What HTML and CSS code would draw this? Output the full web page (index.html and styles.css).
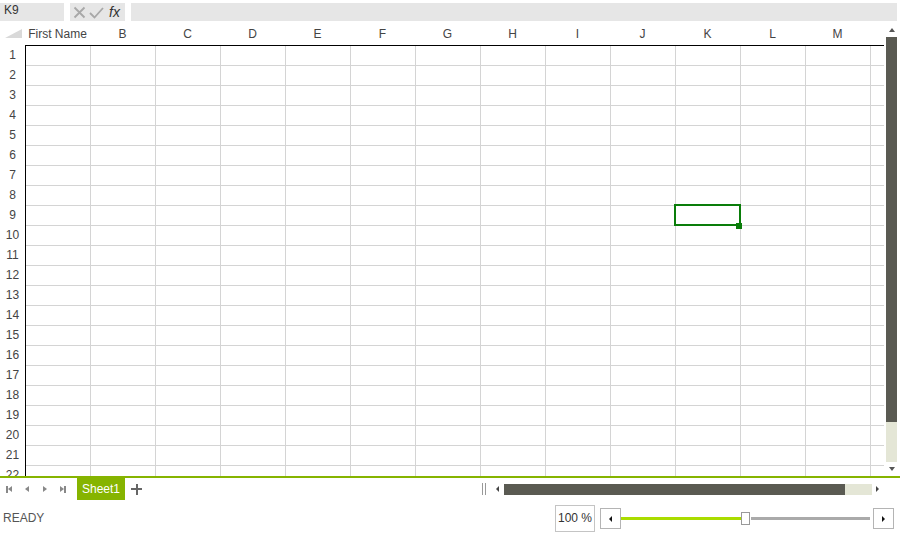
FILE: index.html
```html
<!DOCTYPE html>
<html>
<head>
<meta charset="utf-8">
<link rel="stylesheet" href="styles.css">
</head>
<body>
<div class="app">
  <div class="formula-bar">
    <div class="namebox">K9</div>
    <div class="fx-btns">
      <svg width="13" height="13" viewBox="0 0 13 13" class="ico"><path d="M1.5 1.5 L11.5 11.5 M11.5 1.5 L1.5 11.5" stroke="#a8a8a8" stroke-width="1.8" fill="none"/></svg>
      <svg width="15" height="13" viewBox="0 0 15 13" class="ico"><path d="M1 7 L5.5 11.5 L14 2" stroke="#a8a8a8" stroke-width="1.8" fill="none"/></svg>
      <span class="fx">fx</span>
    </div>
    <div class="formula"></div>
  </div>

  <div class="main">
    <div class="grid">
      <div class="hrow">
        <div class="corner"><span class="tri"></span></div>
        <div class="ch">First Name</div><div class="ch">B</div><div class="ch">C</div><div class="ch">D</div><div class="ch">E</div><div class="ch">F</div><div class="ch">G</div><div class="ch">H</div><div class="ch">I</div><div class="ch">J</div><div class="ch">K</div><div class="ch">L</div><div class="ch">M</div><div class="ch">N</div>
      </div>
      <div class="body">
        <div class="row"><div class="rh">1</div><span></span><span></span><span></span><span></span><span></span><span></span><span></span><span></span><span></span><span></span><span></span><span></span><span></span><span></span></div>
        <div class="row"><div class="rh">2</div><span></span><span></span><span></span><span></span><span></span><span></span><span></span><span></span><span></span><span></span><span></span><span></span><span></span><span></span></div>
        <div class="row"><div class="rh">3</div><span></span><span></span><span></span><span></span><span></span><span></span><span></span><span></span><span></span><span></span><span></span><span></span><span></span><span></span></div>
        <div class="row"><div class="rh">4</div><span></span><span></span><span></span><span></span><span></span><span></span><span></span><span></span><span></span><span></span><span></span><span></span><span></span><span></span></div>
        <div class="row"><div class="rh">5</div><span></span><span></span><span></span><span></span><span></span><span></span><span></span><span></span><span></span><span></span><span></span><span></span><span></span><span></span></div>
        <div class="row"><div class="rh">6</div><span></span><span></span><span></span><span></span><span></span><span></span><span></span><span></span><span></span><span></span><span></span><span></span><span></span><span></span></div>
        <div class="row"><div class="rh">7</div><span></span><span></span><span></span><span></span><span></span><span></span><span></span><span></span><span></span><span></span><span></span><span></span><span></span><span></span></div>
        <div class="row"><div class="rh">8</div><span></span><span></span><span></span><span></span><span></span><span></span><span></span><span></span><span></span><span></span><span></span><span></span><span></span><span></span></div>
        <div class="row"><div class="rh">9</div><span></span><span></span><span></span><span></span><span></span><span></span><span></span><span></span><span></span><span></span><span></span><span></span><span></span><span></span></div>
        <div class="row"><div class="rh">10</div><span></span><span></span><span></span><span></span><span></span><span></span><span></span><span></span><span></span><span></span><span></span><span></span><span></span><span></span></div>
        <div class="row"><div class="rh">11</div><span></span><span></span><span></span><span></span><span></span><span></span><span></span><span></span><span></span><span></span><span></span><span></span><span></span><span></span></div>
        <div class="row"><div class="rh">12</div><span></span><span></span><span></span><span></span><span></span><span></span><span></span><span></span><span></span><span></span><span></span><span></span><span></span><span></span></div>
        <div class="row"><div class="rh">13</div><span></span><span></span><span></span><span></span><span></span><span></span><span></span><span></span><span></span><span></span><span></span><span></span><span></span><span></span></div>
        <div class="row"><div class="rh">14</div><span></span><span></span><span></span><span></span><span></span><span></span><span></span><span></span><span></span><span></span><span></span><span></span><span></span><span></span></div>
        <div class="row"><div class="rh">15</div><span></span><span></span><span></span><span></span><span></span><span></span><span></span><span></span><span></span><span></span><span></span><span></span><span></span><span></span></div>
        <div class="row"><div class="rh">16</div><span></span><span></span><span></span><span></span><span></span><span></span><span></span><span></span><span></span><span></span><span></span><span></span><span></span><span></span></div>
        <div class="row"><div class="rh">17</div><span></span><span></span><span></span><span></span><span></span><span></span><span></span><span></span><span></span><span></span><span></span><span></span><span></span><span></span></div>
        <div class="row"><div class="rh">18</div><span></span><span></span><span></span><span></span><span></span><span></span><span></span><span></span><span></span><span></span><span></span><span></span><span></span><span></span></div>
        <div class="row"><div class="rh">19</div><span></span><span></span><span></span><span></span><span></span><span></span><span></span><span></span><span></span><span></span><span></span><span></span><span></span><span></span></div>
        <div class="row"><div class="rh">20</div><span></span><span></span><span></span><span></span><span></span><span></span><span></span><span></span><span></span><span></span><span></span><span></span><span></span><span></span></div>
        <div class="row"><div class="rh">21</div><span></span><span></span><span></span><span></span><span></span><span></span><span></span><span></span><span></span><span></span><span></span><span></span><span></span><span></span></div>
        <div class="row"><div class="rh">22</div><span></span><span></span><span></span><span></span><span></span><span></span><span></span><span></span><span></span><span></span><span></span><span></span><span></span><span></span></div>
        <div class="selection"><i class="handle"></i></div>
      </div>
    </div>
    <div class="vscroll">
      <div class="arrow-area"><i class="tri-up"></i></div>
      <div class="vthumb"></div>
      <div class="vtrack"></div>
      <div class="arrow-area down"><i class="tri-down"></i></div>
    </div>
  </div>

  <div class="tabbar">
    <div class="nav">
      <div class="navbtn"><i class="bar"></i><i class="tri-left"></i></div>
      <div class="navbtn"><i class="tri-left"></i></div>
      <div class="navbtn"><i class="tri-right"></i></div>
      <div class="navbtn"><i class="tri-right"></i><i class="bar"></i></div>
    </div>
    <div class="tab">Sheet1</div>
    <div class="add"><i class="plus-h"></i><i class="plus-v"></i></div>
    <div class="hscroll">
      <div class="splitter"></div>
      <i class="sm-left"></i>
      <div class="htrack"><div class="hthumb"></div></div>
      <i class="sm-right"></i>
    </div>
  </div>

  <div class="statusbar">
    <div class="ready">READY</div>
    <div class="zoom">
      <div class="zoomval">100 %</div>
      <div class="zbtn"><i class="bk-left"></i></div>
      <div class="slider">
        <div class="fill"></div>
        <div class="thumb"></div>
        <div class="rest"></div>
      </div>
      <div class="zbtn"><i class="bk-right"></i></div>
    </div>
  </div>
</div>
</body>
</html>
```

FILE: styles.css
```css
* { box-sizing: border-box; }
html, body { margin: 0; padding: 0; }
body {
  width: 900px;
  height: 534px;
  overflow: hidden;
  background: #fff;
  font-family: "Liberation Sans", Arial, sans-serif;
  font-size: 12px;
  color: #444;
}
.app { display: flex; flex-direction: column; width: 900px; height: 534px; }

/* formula bar */
.formula-bar {
  display: flex;
  height: 24px;
  padding: 3px 3px 0 0;
  gap: 6px;
}
.namebox {
  width: 64px;
  height: 18px;
  background: #e6e6e6;
  padding-left: 4px;
  line-height: 14px;
  color: #333;
}
.fx-btns {
  width: 55px;
  height: 18px;
  background: #e6e6e6;
  display: flex;
  align-items: center;
  padding-left: 3px;
  gap: 3px;
}
.ico { display: block; }
.fx {
  font-style: italic;
  font-size: 14px;
  color: #333;
  margin-left: 2px;
  line-height: 16px;
}
.formula { flex: 1; height: 18px; background: #e6e6e6; }

/* main grid */
.main { display: flex; height: 452px; }
.grid {
  width: 884px;
  overflow: hidden;
  display: flex;
  flex-direction: column;
}
.hrow { display: flex; height: 22px; flex: none; }
.corner { width: 25px; flex: none; position: relative; }
.tri {
  position: absolute;
  left: 5px;
  top: 5px;
  width: 0; height: 0;
  border-left: 17px solid transparent;
  border-bottom: 9px solid #d9d9d9;
}
.ch {
  width: 65px;
  flex: none;
  border-bottom: 1px solid #000;
  text-align: center;
  line-height: 21px;
  color: #444;
  white-space: nowrap;
}
.body { position: relative; flex: 1; overflow: hidden; }
.row { display: flex; height: 20px; }
.rh {
  width: 26px;
  flex: none;
  border-right: 1px solid #000;
  text-align: center;
  line-height: 19px;
  color: #444;
}
.row span {
  width: 65px;
  flex: none;
  border-right: 1px solid #d4d4d4;
  border-bottom: 1px solid #d4d4d4;
}
.selection {
  position: absolute;
  left: 674px;
  top: 158px;
  width: 67px;
  height: 22px;
  border: 2px solid #0a7d0a;
}
.handle {
  position: absolute;
  right: -3px;
  bottom: -5px;
  width: 6px;
  height: 6px;
  background: #0a7d0a;
}

/* vertical scroll */
.vscroll {
  width: 11px;
  margin-left: 2px;
  display: flex;
  flex-direction: column;
}
.arrow-area { height: 13px; display: flex; justify-content: center; align-items: center; flex: none; }
.arrow-area.down { height: 14px; }
.tri-up { width: 0; height: 0; border-left: 3.5px solid transparent; border-right: 3.5px solid transparent; border-bottom: 4px solid #555; margin-bottom: 1px; }
.tri-down { width: 0; height: 0; border-left: 3.5px solid transparent; border-right: 3.5px solid transparent; border-top: 4px solid #555; }
.vthumb { height: 385px; background: #5a5a52; flex: none; }
.vtrack { height: 40px; background: #e4e6d6; flex: none; }

/* tab bar */
.tabbar {
  height: 24px;
  border-top: 2px solid #86b400;
  display: flex;
  align-items: stretch;
}
.nav { display: flex; width: 77px; }
.navbtn { width: 18px; display: flex; justify-content: center; align-items: center; }
.navbtn .bar { width: 1.5px; height: 7px; background: #888; }
.tri-left { width: 0; height: 0; border-top: 3.5px solid transparent; border-bottom: 3.5px solid transparent; border-right: 4px solid #888; }
.tri-right { width: 0; height: 0; border-top: 3.5px solid transparent; border-bottom: 3.5px solid transparent; border-left: 4px solid #888; }
.tab {
  width: 48px;
  background: #86b400;
  color: #fff;
  text-align: center;
  line-height: 22px;
}
.add { width: 22px; position: relative; }
.plus-h { position: absolute; left: 6px; top: 10px; width: 11px; height: 2px; background: #666; }
.plus-v { position: absolute; left: 10.5px; top: 5.5px; width: 2px; height: 11px; background: #666; }
.hscroll {
  margin-left: auto;
  margin-right: 21px;
  display: flex;
  align-items: center;
}
.splitter { width: 4px; height: 12px; border-left: 1px solid #999; border-right: 1px solid #999; margin-right: 10px; }
.sm-left { width: 0; height: 0; border-top: 3px solid transparent; border-bottom: 3px solid transparent; border-right: 3px solid #444; margin-right: 5px; }
.sm-right { width: 0; height: 0; border-top: 3px solid transparent; border-bottom: 3px solid transparent; border-left: 3px solid #444; margin-left: 4px; }
.htrack { width: 368px; height: 11px; background: #e4e6d6; margin-top: 1px; }
.hthumb { width: 341px; height: 11px; background: #5a5a52; }

/* status bar */
.statusbar {
  flex: 1;
  display: flex;
  align-items: center;
  padding: 0 6px 0 3px;
}
.ready { color: #555; margin-top: 2px; }
.zoom { margin-left: auto; display: flex; align-items: center; }
.zoomval {
  width: 40px;
  height: 27px;
  border: 1px solid #c4c4c4;
  text-align: center;
  line-height: 25px;
  color: #333;
  margin-right: 5px;
  margin-top: 3px;
}
.zbtn {
  width: 21px;
  height: 21px;
  border: 1px solid #b4b4b4;
  display: flex;
  justify-content: center;
  align-items: center;
  margin-top: 3px;
}
.bk-left { width: 0; height: 0; border-top: 3px solid transparent; border-bottom: 3px solid transparent; border-right: 3px solid #111; }
.bk-right { width: 0; height: 0; border-top: 3px solid transparent; border-bottom: 3px solid transparent; border-left: 3px solid #111; }
.slider { display: flex; align-items: center; width: 252px; margin-top: 3px; }
.fill { width: 120px; height: 3px; background: #aadc00; }
.thumb { width: 9px; height: 13px; background: #fff; border: 1px solid #999; }
.rest { width: 119px; height: 3px; background: #aaa; margin-left: 1px; }
```
